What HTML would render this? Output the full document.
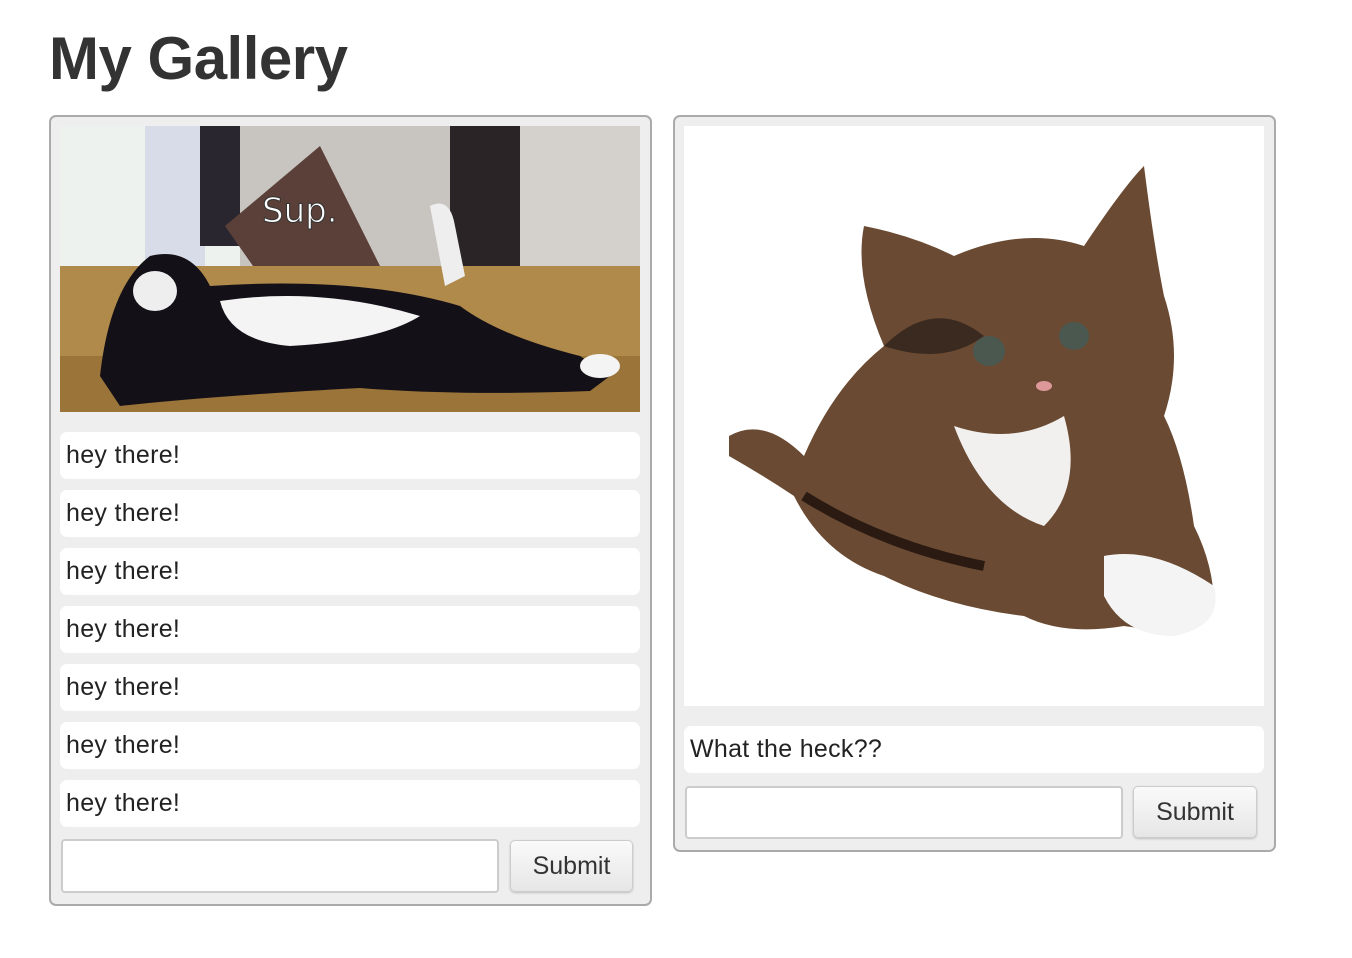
<!DOCTYPE html>
<html><head><meta charset="utf-8"><style>
*{box-sizing:border-box;margin:0;padding:0}
body{width:1352px;height:958px;background:#fff;font-family:"Liberation Sans",Arial,sans-serif;color:#333;position:relative;overflow:hidden}
h1{position:absolute;left:49px;top:24px;font-size:60px;font-weight:bold;color:#333;line-height:70px;letter-spacing:-0.5px}
.panel{position:absolute;background:#eee;border:2px solid #aaa;border-radius:7px}
.c{position:absolute;background:#fff;border-radius:7px;height:47px;font-size:25px;letter-spacing:0.3px;line-height:47px;padding-left:6px;color:#222}
.in{position:absolute;background:#fff;border:2px solid #ccc;border-radius:4px;height:54px}
.btn{position:absolute;background:linear-gradient(#fafafa,#e6e6e6);border:1px solid #ccc;border-radius:5px;box-shadow:0 1px 2px rgba(0,0,0,.2);font-size:25px;text-align:center;line-height:50px;height:52px;color:#333}
.img{position:absolute}
</style></head><body>
<h1>My Gallery</h1>
<div class="panel" style="left:49px;top:115px;width:603px;height:791px"></div>
<svg class="img" style="left:60px;top:126px" width="580" height="286" viewBox="0 0 580 286">
<rect width="580" height="286" fill="#eef2ee"/>
<rect x="85" y="0" width="60" height="140" fill="#d8dce8"/>
<rect x="140" y="0" width="40" height="120" fill="#2a2630"/>
<rect x="180" y="0" width="220" height="150" fill="#c8c4c0"/>
<rect x="390" y="0" width="70" height="180" fill="#2a2426"/>
<rect x="460" y="0" width="120" height="170" fill="#d4d0cc"/>
<polygon points="165,100 260,20 320,140 200,150" fill="#5a4038"/>
<rect x="0" y="140" width="580" height="146" fill="#b08a4a"/>
<rect x="0" y="230" width="580" height="56" fill="#9a7438"/>
<path d="M40 250 Q50 160 90 130 Q130 120 150 160 Q300 150 400 180 Q440 210 520 230 L550 250 L530 265 Q400 270 300 262 Q150 270 60 280 Z" fill="#141018"/>
<path d="M160 175 Q260 160 360 190 Q320 215 230 220 Q170 215 160 175Z" fill="#f4f4f4"/>
<path d="M370 80 Q390 70 395 100 L405 150 L385 160 Z" fill="#eee"/>
<ellipse cx="540" cy="240" rx="20" ry="12" fill="#f4f4f4"/>
<ellipse cx="95" cy="165" rx="22" ry="20" fill="#eee"/>
<text x="202" y="96" font-family="DejaVu Sans, sans-serif" font-size="34" fill="#fff" stroke="#333" stroke-width="1">Sup.</text>
</svg>
<div class="c" style="left:60px;top:432px;width:580px">hey there!</div>
<div class="c" style="left:60px;top:490px;width:580px">hey there!</div>
<div class="c" style="left:60px;top:548px;width:580px">hey there!</div>
<div class="c" style="left:60px;top:606px;width:580px">hey there!</div>
<div class="c" style="left:60px;top:664px;width:580px">hey there!</div>
<div class="c" style="left:60px;top:722px;width:580px">hey there!</div>
<div class="c" style="left:60px;top:780px;width:580px">hey there!</div>
<div class="in" style="left:61px;top:839px;width:438px"></div>
<div class="btn" style="left:510px;top:840px;width:123px">Submit</div>

<div class="panel" style="left:673px;top:115px;width:603px;height:737px"></div>
<svg class="img" style="left:684px;top:126px" width="580" height="580" viewBox="0 0 580 580">
<rect width="580" height="580" fill="#fff"/>
<path d="M45 310 Q80 290 120 330 Q150 260 200 220 Q170 150 180 100 Q230 110 270 130 Q340 100 400 120 Q440 60 460 40 Q470 120 480 170 Q500 230 480 290 Q500 330 510 400 Q530 440 530 480 Q500 510 440 500 Q380 510 340 490 Q260 480 200 450 Q140 430 110 370 Q80 350 45 330Z" fill="#6a4a32"/>
<path d="M270 300 Q330 320 380 290 Q400 360 360 400 Q300 380 270 300Z" fill="#f2f0ee"/>
<path d="M420 430 Q470 420 530 460 Q540 500 490 510 Q440 510 420 470Z" fill="#f4f4f4"/>
<path d="M200 220 Q260 240 300 210 Q250 170 200 220Z" fill="#3a2a20"/>
<ellipse cx="305" cy="225" rx="16" ry="15" fill="#4a5850"/>
<ellipse cx="390" cy="210" rx="15" ry="14" fill="#4a5850"/>
<ellipse cx="360" cy="260" rx="8" ry="5" fill="#d99"/>
<path d="M120 370 Q200 420 300 440" stroke="#2a1a12" stroke-width="10" fill="none"/>
</svg>
<div class="c" style="left:684px;top:726px;width:580px">What the heck??</div>
<div class="in" style="left:685px;top:786px;width:438px;height:53px"></div>
<div class="btn" style="left:1133px;top:786px;width:124px">Submit</div>
</body></html>
